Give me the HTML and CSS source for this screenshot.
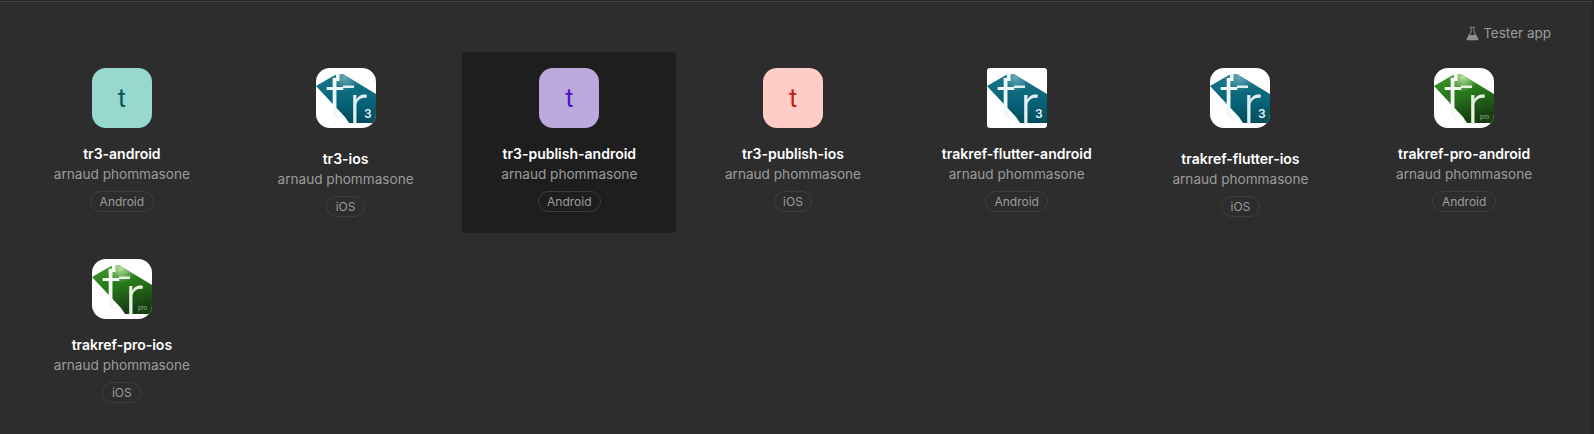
FILE: index.html
```html
<!DOCTYPE html>
<html lang="en">
<head>
    <meta charset="UTF-8">
    <meta name="viewport" content="width=device-width, initial-scale=1.0">
    <title>Apps</title>
    <link rel="stylesheet" href="styles.css">
</head>
<body>
    <!-- Logos shared by the cards -->
    <svg class="sprite" aria-hidden="true">
        <defs>
            <linearGradient id="teal-body" x1="0" y1="0" x2="0" y2="1">
                <stop offset="0" stop-color="#1b7686"/>
                <stop offset="0.55" stop-color="#07647a"/>
                <stop offset="1" stop-color="#014c5c"/>
            </linearGradient>
            <radialGradient id="teal-glow" gradientUnits="userSpaceOnUse" cx="29" cy="9" r="15">
                <stop offset="0" stop-color="#7fb9c3" stop-opacity="0.75"/>
                <stop offset="1" stop-color="#7fb9c3" stop-opacity="0"/>
            </radialGradient>
            <linearGradient id="green-body" x1="0" y1="0" x2="0.3" y2="1">
                <stop offset="0" stop-color="#3f9a2c"/>
                <stop offset="0.55" stop-color="#26731b"/>
                <stop offset="1" stop-color="#173f12"/>
            </linearGradient>
            <radialGradient id="green-glow" gradientUnits="userSpaceOnUse" cx="29" cy="9" r="15">
                <stop offset="0" stop-color="#c4ecae" stop-opacity="0.9"/>
                <stop offset="1" stop-color="#c4ecae" stop-opacity="0"/>
            </radialGradient>
            <symbol id="logo-tr3" viewBox="0 0 60 60">
                <rect width="60" height="60" fill="#fff"/>
                <polygon points="0,18 19,7 27,6 60,26 60,55 33,55 29,49" fill="url(#teal-body)"/>
                <polygon points="0,18 19,7 27,6 60,26 60,55 33,55 29,49" fill="url(#teal-glow)"/>
                <rect x="20" y="5" width="3.500" height="8" fill="#f1f8f9"/>
                <rect x="27" y="17.500" width="11" height="2.500" fill="#e2eff2"/>
                <text class="logo-letter" x="10" y="51" font-size="62" fill="#f1f8f9">t</text>
                <text class="logo-letter" x="33" y="56" font-size="55" fill="#e2eff2">r</text>
                <text class="logo-num" x="48" y="50" font-size="12" fill="#e6f1f3">3</text>
            </symbol>
            <symbol id="logo-pro" viewBox="0 0 60 60">
                <rect width="60" height="60" fill="#fff"/>
                <polygon points="0,18 19,7 27,6 60,26 60,55 33,55 29,49" fill="url(#green-body)"/>
                <polygon points="0,18 19,7 27,6 60,26 60,55 33,55 29,49" fill="url(#green-glow)"/>
                <rect x="20" y="5" width="3.500" height="8" fill="#f5faf2"/>
                <rect x="27" y="17.500" width="11" height="2.500" fill="#e8f3e2"/>
                <text class="logo-letter" x="10" y="51" font-size="62" fill="#f5faf2">t</text>
                <text class="logo-letter" x="33" y="56" font-size="55" fill="#e8f3e2">r</text>
                <text class="logo-pro" x="46" y="51" font-size="6" fill="#9fb298">pro</text>
            </symbol>
        </defs>
    </svg>

    <div class="page">
        <div class="toolbar">
            <span class="tester-link">
                <svg class="flask" viewBox="0 0 14 16">
                    <path d="M4.2 .6h5.6v1H9v4.6l4.3 7.400c.5.9-.1 1.800-1.100 1.800H1.800c-1 0-1.600-.9-1.100-1.800L5 6.200V1.600H4.200z M6 1.600v4.900L4.300 9.500h5.400L8 6.500V1.600z" fill-rule="evenodd"/>
                </svg>
                Tester app
            </span>
        </div>

        <div class="app-grid">
            <div class="app-card">
                <div class="app-icon icon-teal">t</div>
                <div class="app-name">tr3-android</div>
                <div class="app-owner">arnaud phommasone</div>
                <span class="app-platform">Android</span>
            </div>
            <div class="app-card">
                <svg class="app-icon logo-ios"><use href="#logo-tr3"/></svg>
                <div class="app-name">tr3-ios</div>
                <div class="app-owner">arnaud phommasone</div>
                <span class="app-platform">iOS</span>
            </div>
            <div class="app-card selected">
                <div class="app-icon icon-purple">t</div>
                <div class="app-name">tr3-publish-android</div>
                <div class="app-owner">arnaud phommasone</div>
                <span class="app-platform">Android</span>
            </div>
            <div class="app-card">
                <div class="app-icon icon-pink">t</div>
                <div class="app-name">tr3-publish-ios</div>
                <div class="app-owner">arnaud phommasone</div>
                <span class="app-platform">iOS</span>
            </div>
            <div class="app-card">
                <svg class="app-icon logo-square"><use href="#logo-tr3"/></svg>
                <div class="app-name">trakref-flutter-android</div>
                <div class="app-owner">arnaud phommasone</div>
                <span class="app-platform">Android</span>
            </div>
            <div class="app-card">
                <svg class="app-icon logo-ios"><use href="#logo-tr3"/></svg>
                <div class="app-name">trakref-flutter-ios</div>
                <div class="app-owner">arnaud phommasone</div>
                <span class="app-platform">iOS</span>
            </div>
            <div class="app-card">
                <svg class="app-icon"><use href="#logo-pro"/></svg>
                <div class="app-name">trakref-pro-android</div>
                <div class="app-owner">arnaud phommasone</div>
                <span class="app-platform">Android</span>
            </div>
            <div class="app-card">
                <svg class="app-icon"><use href="#logo-pro"/></svg>
                <div class="app-name">trakref-pro-ios</div>
                <div class="app-owner">arnaud phommasone</div>
                <span class="app-platform">iOS</span>
            </div>
        </div>
    </div>
</body>
</html>
```

FILE: styles.css
```css
html, body {
    height: 100%;
}

body {
    box-sizing: border-box;
    margin: 0;
    border-top: 1px solid #262626;
    background: #2d2d2d;
    font-family: 'Inter', 'Liberation Sans', sans-serif;
    overflow: hidden;
}

.sprite {
    position: absolute;
    width: 0;
    height: 0;
}

.page {
    box-sizing: border-box;
    height: 100%;
    padding: 0 20px 0 15px;
    border-top: 1px solid #454545;
    border-right: 3px solid #282828;
}

.toolbar {
    display: flex;
    justify-content: flex-end;
    height: 50px;
    padding: 21px 20px 0 0;
    box-sizing: border-box;
}

.tester-link {
    display: flex;
    align-items: center;
    gap: 4px;
    height: 20px;
    font-size: 13.5px;
    color: #9c9c9c;
}

.flask {
    width: 13px;
    height: 15px;
    fill: #8f8f8f;
}

.app-grid {
    display: grid;
    grid-template-columns: repeat(7, 1fr);
    gap: 10px;
}

.app-card {
    display: flex;
    flex-direction: column;
    align-items: center;
    padding: 16px 0;
    border-radius: 4px;
}

.app-card.selected {
    background: #1e1e1e;
}

.app-icon {
    display: flex;
    align-items: center;
    justify-content: center;
    flex: none;
    width: 60px;
    height: 60px;
    margin-bottom: 16px;
    border-radius: 14px;
    font-family: 'Roboto', sans-serif;
    font-size: 25px;
}

.logo-ios {
    margin-bottom: 21px;
}

.logo-square {
    border-radius: 3px;
}

.icon-teal {
    background: #97d9cf;
    color: #03594d;
}

.icon-purple {
    background: #bcaadc;
    color: #4a12cf;
}

.icon-pink {
    background: #ffccc6;
    color: #c31c1c;
}

.logo-letter {
    font-family: 'Roboto', sans-serif;
    font-weight: 300;
}

.logo-num {
    font-family: 'Inter', sans-serif;
    font-weight: 600;
}

.logo-pro {
    font-family: 'Inter', sans-serif;
}

.app-name {
    font-size: 14px;
    font-weight: 600;
    line-height: 20px;
    color: #fff;
}

.app-owner {
    font-size: 13.6px;
    line-height: 20px;
    color: #9c9c9c;
}

.app-platform {
    box-sizing: border-box;
    height: 21px;
    margin-top: 7px;
    padding: 0 8.500px;
    border: 1px solid #3e3e3e;
    border-radius: 11px;
    font-size: 12px;
    line-height: 19px;
    color: #9c9c9c;
}
```
